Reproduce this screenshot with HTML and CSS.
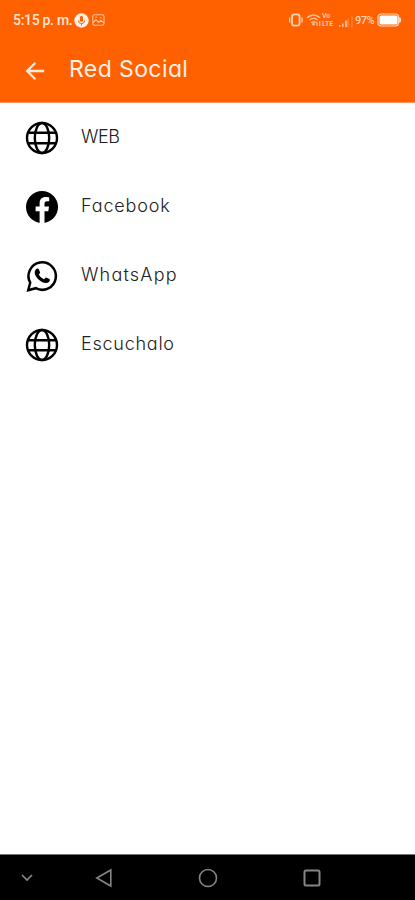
FILE: index.html
```html
<!DOCTYPE html>
<html lang="es">
<head>
<meta charset="utf-8">
<meta name="viewport" content="width=device-width, initial-scale=1">
<title>Red Social</title>
<link rel="stylesheet" href="styles.css">
</head>
<body>
<header class="header">
  <div class="status">
    <span class="time">5:15 p. m.</span>
    <svg class="mic" width="15" height="15" viewBox="0 0 15 15"><circle cx="7.5" cy="7.5" r="7.2" fill="#fff0e8"/><rect x="6" y="2.8" width="3" height="6" rx="1.5" fill="#ff6000"/><path d="M4.4 7.5a3.1 3.1 0 0 0 6.2 0M7.5 10.6v2" fill="none" stroke="#ff6000"/></svg>
    <svg class="photo" width="13" height="12" viewBox="0 0 13 12" fill="none" stroke="#ffc6a3" stroke-width="1.1"><rect x=".8" y=".8" width="11.2" height="10.4" rx="1.8"/><path d="M1 8.5l3-2.7 2.7 2.6 2-2 3.2 2.3M3.2 3.3h2M8 3.8h1.5"/></svg>
    <div class="signals">
      <svg width="15" height="14" viewBox="0 0 15 14" fill="none" stroke="#ffd3b8"><rect x="3" y="1.3" width="7.6" height="11.4" rx="2.4" stroke-width="1.8"/><path d="M.7 4.5v5M13 4.5v5" stroke-width="1.3"/></svg>
      <svg class="wifi" width="16" height="14" viewBox="0 0 16 14" fill="none" stroke="#ffc6a3" stroke-width="1.4"><path d="M1 4.7q6.5-5.4 13 0M3.2 7.2q4.3-3.6 8.6 0M5.3 9.6q2.2-1.7 4.4 0"/><circle cx="7.5" cy="11.2" r=".6"/><path d="M11 9v4M13.7 8v5" stroke-width="1.2"/></svg>
      <span class="volte"><span>Vo</span><span>LTE</span></span>
      <svg class="bars" width="14" height="12" viewBox="0 0 14 12" fill="#ffb78e"><path d="M0 9h1.6v2H0zM3 7.5h1.6V11H3zM6 4.5h2.2V11H6z"/><path d="M8.7 2.5h1V11h-1zM12.5 0h1v12h-1z" opacity=".5"/></svg>
      <span class="percent">97%</span>
      <svg width="25" height="14" viewBox="0 0 25 14"><rect x="1" y="1" width="20.5" height="12" rx="3" fill="none" stroke="#ffd9c2" stroke-width="1.2"/><rect x="2.5" y="2.5" width="18" height="9" rx="1.5" fill="#fff"/><path d="M22.8 4.5q1.6 2.5 0 5z" fill="#ffe5d6" stroke="#ffe5d6"/></svg>
    </div>
  </div>
  <div class="toolbar">
    <svg class="back" width="20" height="20" viewBox="0 0 20 20" fill="none" stroke="#ffeadd" stroke-width="2.3"><path d="M10.4 1.8L2.2 10l8.2 8.2M2.2 10h17"/></svg>
    <h1>Red Social</h1>
  </div>
</header>
<main class="links">
  <a class="row">
    <svg class="icon" viewBox="0 0 34 34" fill="none" stroke="#000" stroke-width="2.4"><circle cx="17" cy="17" r="15"/><ellipse cx="17" cy="17" rx="7.2" ry="15"/><path d="M3 11.7h28M3 22.3h28"/></svg>
    <span class="web">WEB</span>
  </a>
  <a class="row">
    <svg class="icon" viewBox="0 0 34 34"><circle cx="17" cy="17" r="16" fill="#000"/><path d="M14.6 33V21.2h-4V16.5h4V13.2c0-4 2.4-6.2 6-6.2 1.8 0 3.6.3 3.6.3v4h-2c-2 0-2.7 1.2-2.7 2.5v2.7h4.5l-.7 4.7h-3.8V33z" fill="#fff"/></svg>
    <span class="facebook">Facebook</span>
  </a>
  <a class="row">
    <svg class="icon" viewBox="0 0 34 34"><path d="M3.2 31.2l2-7.5A13.7 13.7 0 1 1 10.800 29.200z" fill="none" stroke="#000" stroke-width="2.5"/><path d="M11.2 10c.7-.8 2.100-.8 2.500 0l1.400 3.300c.3.700-.9 1.700-1.200 2.300.9 2 2.800 3.700 5 4.600.8-.4 1.500-2 2.200-1.800l3.300 1.600c1 .5.200 2.500-.5 3.100-2 1.600-4.700 1-7-.2-3-1.500-5.300-4-6.700-6.800-.8-2-.6-4.600 1-6.100z" fill="#000"/></svg>
    <span class="whatsapp">WhatsApp</span>
  </a>
  <a class="row">
    <svg class="icon" viewBox="0 0 34 34" fill="none" stroke="#000" stroke-width="2.4"><circle cx="17" cy="17" r="15"/><ellipse cx="17" cy="17" rx="7.2" ry="15"/><path d="M3 12.2h28M3 22.2h28"/></svg>
    <span class="listen">Escuchalo</span>
  </a>
</main>
<nav class="navbar">
  <svg width="14" height="10" viewBox="0 0 14 10"><path d="M2 2l5 5 5-5" stroke-width="1.7"/></svg>
  <svg width="18" height="20" viewBox="0 0 18 20"><path d="M15.8 2v16L1.800 10z"/></svg>
  <svg width="20" height="20" viewBox="0 0 20 20"><circle cx="10" cy="10" r="8.5"/></svg>
  <svg width="18" height="18" viewBox="0 0 18 18"><rect x="1.5" y="1.5" width="15" height="15" rx="1.5" stroke-width="2"/></svg>
</nav>
</body>
</html>
```
FILE: styles.css
```css
* { box-sizing: border-box; }
body {
  margin: 0;
  height: 900px;
  display: flex;
  flex-direction: column;
  background: #fff;
  font-family: Inter, "Liberation Sans", sans-serif;
  font-feature-settings: "cv11";
  overflow: hidden;
}
svg { display: block; flex: none; }
.header {
  height: 103px;
  background: #ff6000;
  border-bottom: 1px solid #ff9657;
}
.status {
  height: 40px;
  padding: 0 13px;
  display: flex;
  align-items: center;
  font-family: Roboto, sans-serif;
  color: #ffe5d6;
}
.time { width: 61px; font-size: 14px; font-weight: 500; letter-spacing: -.3px; white-space: nowrap; }
.photo { margin-left: 3px; }
.signals { margin-left: auto; display: flex; align-items: center; }
.wifi { margin-left: 2px; }
.volte { width: 15px; display: flex; flex-direction: column; font-size: 7px; line-height: 8px; font-weight: 700; letter-spacing: -.1px; color: #ffc6a3; }
.bars { margin-top: 3px; margin-left: 2px; }
.percent { margin-left: 2px; width: 22px; font-size: 11px; font-weight: 500; letter-spacing: -.5px; color: #ffd3b8; }
.toolbar { height: 62px; padding: 0 25px; display: flex; align-items: center; }
h1 { margin: -4px 0 0 24px; font-size: 23px; line-height: 30px; font-weight: 400; letter-spacing: .4px; color: #fff0e8; white-space: nowrap; }
.links { flex: 1; }
.row { height: 69.2px; padding-left: 25px; display: flex; align-items: center; }
.icon { width: 34px; height: 34px; }
.row span { margin: -2px 0 0 22px; font-size: 18px; line-height: 26px; font-weight: 300; color: #222; }
.row .web { letter-spacing: -.4px; }
.row .facebook { letter-spacing: .85px; }
.row .whatsapp { letter-spacing: 1.2px; }
.row .listen { letter-spacing: .75px; }
.navbar {
  height: 46px;
  padding-left: 20px;
  display: grid;
  grid-template-columns: 32px 104px 104px 104px;
  align-items: center;
  background: #000;
  border-top: 1px solid #777;
}
.navbar svg { justify-self: center; fill: none; stroke: #858585; stroke-width: 1.6; }
.navbar svg:first-child { justify-self: start; }
```
